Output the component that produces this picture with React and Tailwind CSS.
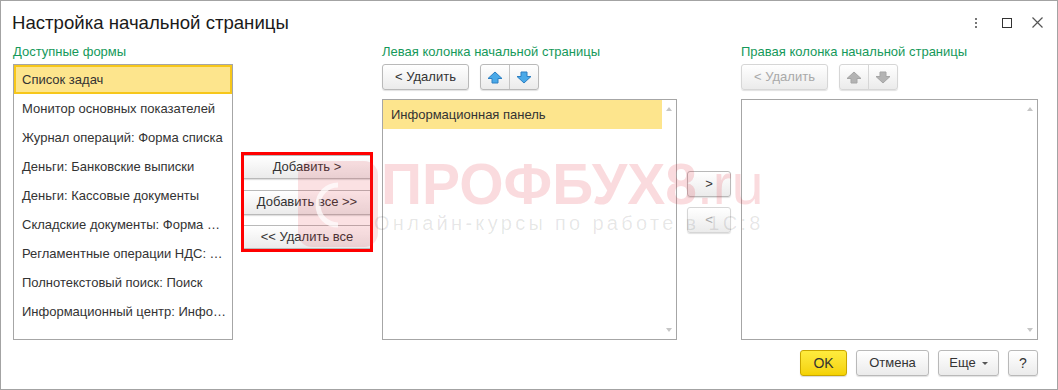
import React from "react";

const availableForms = [
  "Список задач",
  "Монитор основных показателей",
  "Журнал операций: Форма списка",
  "Деньги: Банковские выписки",
  "Деньги: Кассовые документы",
  "Складские документы: Форма …",
  "Регламентные операции НДС: …",
  "Полнотекстовый поиск: Поиск",
  "Информационный центр: Инфо…",
];

const Btn = ({ children, className = "", disabled }) => (
  <div
    className={`flex items-center justify-center rounded-[3px] border bg-linear-to-b from-white to-[#ebebeb] shadow-[0_1px_1px_rgba(0,0,0,0.12)] text-[13px] ${
      disabled ? "border-[#d6d6d6] text-[#a9a9a9]" : "border-[#b9b9b9] text-[#333]"
    } ${className}`}
  >
    {children}
  </div>
);

const Arrow = ({ down, disabled }) => (
  <svg width="16" height="13" viewBox="0 0 16 13" className={down ? "rotate-180" : ""}>
    <path
      d="M8 1 L15 7.5 L11 7.5 L11 12 L5 12 L5 7.5 L1 7.5 Z"
      fill={disabled ? "#b3b3b3" : "#4aa9e8"}
      stroke={disabled ? "#a5a5a5" : "#2c7fc2"}
      strokeWidth="1"
      strokeLinejoin="round"
    />
  </svg>
);

const ArrowGroup = ({ disabled }) => (
  <div
    className={`flex h-[26px] w-[59px] rounded-[3px] border bg-linear-to-b from-white to-[#ebebeb] shadow-[0_1px_1px_rgba(0,0,0,0.12)] ${
      disabled ? "border-[#d6d6d6]" : "border-[#b9b9b9]"
    }`}
  >
    <div className="flex flex-1 items-center justify-center">
      <Arrow disabled={disabled} />
    </div>
    <div className={`w-px ${disabled ? "bg-[#d6d6d6]" : "bg-[#c4c4c4]"}`} />
    <div className="flex flex-1 items-center justify-center">
      <Arrow down disabled={disabled} />
    </div>
  </div>
);

const ScrollCol = () => (
  <div className="flex w-[14px] flex-col items-center justify-between py-[7px]">
    <div className="h-0 w-0 border-x-[3px] border-b-[4px] border-x-transparent border-b-[#c6c6c6]" />
    <div className="h-0 w-0 border-x-[3px] border-t-[4px] border-x-transparent border-t-[#c6c6c6]" />
  </div>
);

export default function App() {
  return (
    <div className="relative flex h-[390px] w-[1058px] flex-col overflow-hidden border border-[#a3a3a3] bg-white font-['Liberation_Sans',Arial,sans-serif] text-[#333]">
      {/* header */}
      <div className="flex h-[43px] shrink-0 items-center pl-[11px] pr-[14px]">
        <div className="text-[18.6px] leading-[22px] text-[#1a1a1a]">Настройка начальной страницы</div>
        <div className="ml-auto flex items-center">
          <div className="flex flex-col gap-[2px]">
            <div className="h-[2px] w-[2px] bg-[#777]" />
            <div className="h-[2px] w-[2px] bg-[#777]" />
            <div className="h-[2px] w-[2px] bg-[#777]" />
          </div>
          <div className="ml-[25px] h-[10px] w-[10px] border-[1.5px] border-[#333]" />
          <svg width="11" height="11" viewBox="0 0 11 11" className="ml-[20px]">
            <path d="M0.5 0.5 L10.5 10.5 M10.5 0.5 L0.5 10.5" stroke="#555" strokeWidth="1.2" />
          </svg>
        </div>
      </div>

      {/* content */}
      <div className="flex h-[296px] shrink-0 pl-[12px]">
        {/* available forms */}
        <div className="flex w-[220px] flex-col">
          <div className="h-[15px] text-[13px] leading-[15px] text-[#15995a]">Доступные формы</div>
          <div className="mt-[5px] h-[276px] border border-[#a6a6a6]">
            {availableForms.map((f, i) => (
              <div
                key={f}
                className={`flex h-[29px] items-center text-[13px] ${
                  i === 0 ? "border-2 border-[#f7c71a] bg-[#fde58d] pl-[6px]" : "pl-[8px]"
                }`}
              >
                {f}
              </div>
            ))}
          </div>
        </div>

        {/* add / remove buttons */}
        <div className="ml-[8px] mt-[108px] flex h-[100px] w-[132px] flex-col justify-between overflow-hidden border-[3px] border-[#ff0000]">
          <Btn className="h-[24px] rounded-none border-x-0">Добавить &gt;</Btn>
          <Btn className="h-[25px] rounded-none border-x-0">Добавить все &gt;&gt;</Btn>
          <Btn className="h-[24px] rounded-none border-x-0">&lt;&lt; Удалить все</Btn>
        </div>

        {/* left column */}
        <div className="ml-[9px] flex w-[295px] flex-col">
          <div className="h-[15px] text-[13px] leading-[15px] text-[#15995a]">Левая колонка начальной страницы</div>
          <div className="mt-[5px] flex h-[26px] gap-[11px]">
            <Btn className="w-[87px]">&lt; Удалить</Btn>
            <ArrowGroup />
          </div>
          <div className="mt-[9px] flex h-[241px] border border-[#a6a6a6]">
            <div className="flex-1">
              <div className="flex h-[29px] items-center bg-[#fde58d] pl-[8px] text-[13px]">Информационная панель</div>
            </div>
            <ScrollCol />
          </div>
        </div>

        {/* transfer buttons */}
        <div className="ml-[10px] mt-[127px] flex w-[44px] flex-col gap-[10px]">
          <Btn className="h-[26px]">&gt;</Btn>
          <Btn className="h-[26px]" disabled>&lt;</Btn>
        </div>

        {/* right column */}
        <div className="ml-[10px] flex w-[297px] flex-col">
          <div className="h-[15px] text-[13px] leading-[15px] text-[#15995a]">Правая колонка начальной страницы</div>
          <div className="mt-[5px] flex h-[26px] gap-[11px]">
            <Btn className="w-[87px]" disabled>&lt; Удалить</Btn>
            <ArrowGroup disabled />
          </div>
          <div className="mt-[9px] flex h-[241px] border border-[#a6a6a6]">
            <div className="flex-1" />
            <ScrollCol />
          </div>
        </div>
      </div>

      {/* footer */}
      <div className="mt-[10px] flex h-[26px] shrink-0 justify-end gap-[9px] pr-[19px]">
        <div className="flex w-[47px] items-center justify-center rounded-[3px] border border-[#c9a600] bg-linear-to-b from-[#ffec3d] to-[#f4d200] text-[14px] text-[#333] shadow-[0_1px_1px_rgba(0,0,0,0.15)]">
          OK
        </div>
        <Btn className="w-[73px]">Отмена</Btn>
        <Btn className="w-[61px] gap-[6px]">
          <span>Еще</span>
          <span className="h-0 w-0 border-x-[3px] border-t-[3px] border-x-transparent border-t-[#555]" />
        </Btn>
        <Btn className="w-[30px] text-[14px]">?</Btn>
      </div>

      {/* watermark */}
      <div className="pointer-events-none absolute left-[297px] top-[160px]">
        <svg width="80" height="86" viewBox="0 0 80 86">
          <rect x="0" y="0" width="80" height="86" rx="14" fill="rgba(228,40,60,0.14)" />
          <path d="M40 24 A20 20 0 1 0 40 64" fill="none" stroke="rgba(255,255,255,0.7)" strokeWidth="5" />
        </svg>
      </div>
      <div className="pointer-events-none absolute left-[380px] top-[155px] flex flex-col">
        <div className="flex text-[57px] leading-[57px]">
          <span className="font-bold text-[rgba(228,40,60,0.17)]">ПРОФБУХ8</span>
          <span className="text-[rgba(228,40,60,0.17)]">.ru</span>
        </div>
        <div className="-ml-[7px] text-[20px] leading-[20px] tracking-[3.3px] text-[rgba(0,0,0,0.1)]">
          Онлайн-курсы по работе в 1С:8
        </div>
      </div>
    </div>
  );
}
